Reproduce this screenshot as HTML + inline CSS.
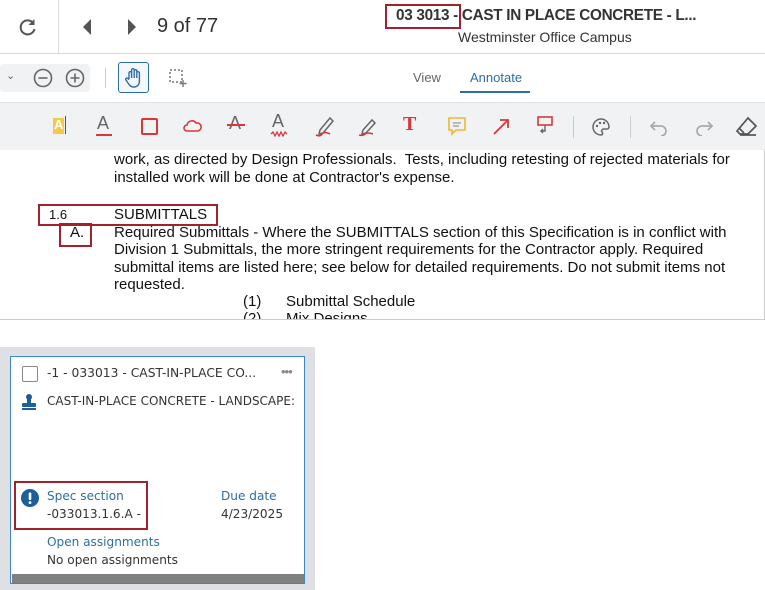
<!DOCTYPE html>
<html><head><meta charset="utf-8"><style>
*{margin:0;padding:0;box-sizing:border-box}
body{width:765px;height:590px;background:#fff;font-family:"Liberation Sans",Arial,sans-serif;position:relative;overflow:hidden;color:#333}
.a{position:absolute}
.doc{font-size:15px;color:#111;line-height:18px;white-space:nowrap}
.red{border:2px solid #a3212b}
.ui{font-family:"DejaVu Sans","Liberation Sans",sans-serif}
</style></head><body>
<div class="a" style="left:0;top:0;width:765px;height:54px;border-bottom:1px solid #d8d9dc;background:#fff"></div>
<div class="a" style="left:58px;top:0;width:1px;height:53px;background:#ddd"></div>
<svg class="a" style="left:18px;top:17px" width="20" height="20" viewBox="0 0 20 20"><path d="M15.5 6.5A7 7 0 1 0 16.5 12" fill="none" stroke="#555" stroke-width="2"/><path d="M16.5 2v6h-6z" fill="#555"/></svg>
<svg class="a" style="left:82px;top:19px" width="10" height="16"><path d="M9 0v16L1 8z" fill="#555"/></svg>
<svg class="a" style="left:127px;top:19px" width="10" height="16"><path d="M1 0v16l8-8z" fill="#555"/></svg>
<div class="a" style="left:157px;top:15px;font-size:20px;color:#333">9 of 77</div>
<div class="a" style="left:396px;top:7px;font-size:15.3px;font-weight:bold;color:#333;letter-spacing:-0.3px">03 3013 - CAST IN PLACE CONCRETE - L...</div>
<div class="a red" style="left:385px;top:4px;width:76px;height:25px"></div>
<div class="a" style="left:458px;top:29px;font-size:14px;color:#333">Westminster Office Campus</div>
<div class="a" style="left:0;top:64px;width:90px;height:28px;background:#f1f2f4;border-radius:4px"></div>
<div class="a" style="left:6px;top:69px;font-size:11px;color:#666">⌄</div>
<svg class="a" style="left:32px;top:67px" width="22" height="22"><circle cx="11" cy="11" r="8.5" fill="none" stroke="#666" stroke-width="1.6"/><path d="M6.5 11h9" stroke="#666" stroke-width="1.6"/></svg>
<svg class="a" style="left:64px;top:67px" width="22" height="22"><circle cx="11" cy="11" r="8.5" fill="none" stroke="#666" stroke-width="1.6"/><path d="M6.5 11h9M11 6.5v9" stroke="#666" stroke-width="1.6"/></svg>
<div class="a" style="left:105px;top:68px;width:1px;height:20px;background:#ccc"></div>
<div class="a" style="left:118px;top:62px;width:31px;height:31px;border:1.5px solid #2e6da4;border-radius:3px;background:#f4f8fc"></div>
<svg class="a" style="left:124px;top:67px" width="20" height="22" viewBox="0 0 20 22"><path d="M5 12V6a1.3 1.3 0 0 1 2.6 0v5V3a1.3 1.3 0 0 1 2.6 0v8V4a1.3 1.3 0 0 1 2.6 0v7V6a1.3 1.3 0 0 1 2.6 0v8c0 4-2.5 6-5.5 6S6 19 4 16l-2-3a1.2 1.2 0 0 1 2-1.5l1 1.2" fill="none" stroke="#2e6da4" stroke-width="1.4"/></svg>
<svg class="a" style="left:168px;top:68px" width="20" height="20"><rect x="2" y="2" width="12" height="12" fill="none" stroke="#777" stroke-width="1.5" stroke-dasharray="2 2"/><path d="M15 12v7M11.5 15.5h7" stroke="#777" stroke-width="1.4"/></svg>
<div class="a" style="left:413px;top:70px;font-size:13px;color:#666">View</div>
<div class="a" style="left:470px;top:70px;font-size:13px;color:#2e6da4">Annotate</div>
<div class="a" style="left:460px;top:91px;width:70px;height:2px;background:#2e6da4"></div>
<div class="a" style="left:0;top:102px;width:765px;height:48px;background:#f1f2f4;border-top:1px solid #e2e3e5"></div>
<div class="a" style="left:53px;top:118px;width:11px;height:16px;background:#f7c948"></div>
<div class="a" style="left:54px;top:117px;font-size:13px;color:#fff;font-weight:bold">A</div>
<div class="a" style="left:65px;top:116px;width:1px;height:18px;background:#555"></div>
<div class="a" style="left:97px;top:113px;font-size:18px;color:#666">A</div><div class="a" style="left:96px;top:134px;width:16px;height:2px;background:#d9383a"></div>
<div class="a" style="left:141px;top:118px;width:17px;height:17px;border:2px solid #d9383a;border-radius:2px"></div>
<svg class="a" style="left:183px;top:119px" width="20" height="14"><path d="M4 12a3 3 0 0 1 0-6 5 5 0 0 1 9-2 4 4 0 0 1 2 8z" fill="none" stroke="#d9383a" stroke-width="1.6"/></svg>
<div class="a" style="left:229px;top:113px;font-size:18px;color:#666">A</div><div class="a" style="left:227px;top:124px;width:18px;height:1.5px;background:#d9383a"></div>
<div class="a" style="left:272px;top:111px;font-size:18px;color:#666">A</div>
<svg class="a" style="left:270px;top:131px" width="18" height="6"><path d="M1 3l2-2 2 4 2-4 2 4 2-4 2 4 2-4 2 2" fill="none" stroke="#d9383a" stroke-width="1.3"/></svg>
<svg class="a" style="left:314px;top:114px" width="22" height="24"><path d="M6 16L16 4l3 3-10 12-4 1z" fill="none" stroke="#666" stroke-width="1.5"/><path d="M2 21q4 2 6-1t8 0" fill="none" stroke="#d9383a" stroke-width="1.6"/></svg>
<svg class="a" style="left:357px;top:114px" width="22" height="24"><path d="M6 16L15 6l3 3-9 10-4 1z" fill="none" stroke="#666" stroke-width="1.5"/><path d="M2 21q4 1 6-1t8 0" fill="none" stroke="#d9383a" stroke-width="1.6"/></svg>
<div class="a" style="left:403px;top:113px;font-size:20px;color:#d9383a;font-family:'Liberation Serif',serif;font-weight:bold">T</div>
<svg class="a" style="left:447px;top:116px" width="20" height="22"><path d="M2 2h16v12H9l-4 4v-4H2z" fill="none" stroke="#f2b632" stroke-width="1.6"/><path d="M6 7h8M6 10h6" stroke="#999" stroke-width="1.3"/></svg>
<svg class="a" style="left:491px;top:117px" width="20" height="20"><path d="M3 17L16 4M9 3h8v8" fill="none" stroke="#d9383a" stroke-width="1.8"/></svg>
<svg class="a" style="left:535px;top:115px" width="20" height="22"><rect x="3" y="2" width="14" height="8" fill="none" stroke="#d9383a" stroke-width="1.6"/><path d="M10 10v6H6m2-2l-2 2 2 2" fill="none" stroke="#666" stroke-width="1.4"/></svg>
<div class="a" style="left:573px;top:116px;width:1px;height:22px;background:#ccc"></div>
<svg class="a" style="left:591px;top:117px" width="20" height="20"><path d="M10 2a8 8 0 0 0 0 16c2 0 2-2 1-3s0-3 2-3h3a2 2 0 0 0 2-2A8 8 0 0 0 10 2z" fill="none" stroke="#666" stroke-width="1.5"/><circle cx="6" cy="9" r="1.2" fill="#666"/><circle cx="9" cy="6" r="1.2" fill="#666"/><circle cx="13" cy="6" r="1.2" fill="#666"/></svg>
<div class="a" style="left:630px;top:116px;width:1px;height:22px;background:#ccc"></div>
<svg class="a" style="left:650px;top:118px" width="20" height="18"><path d="M5 4L1 8l4 4M1 8h10a5 5 0 0 1 0 10" fill="none" stroke="#aaa" stroke-width="1.7"/></svg>
<svg class="a" style="left:693px;top:118px" width="20" height="18"><path d="M15 4l4 4-4 4M19 8H9a5 5 0 0 0 0 10" fill="none" stroke="#aaa" stroke-width="1.7"/></svg>
<svg class="a" style="left:736px;top:116px" width="22" height="20"><path d="M12 2l8 8-8 8H4l-3-3z" fill="none" stroke="#555" stroke-width="1.7"/><path d="M3 12l5 5" stroke="#555" stroke-width="1.7"/><path d="M4 19h16" stroke="#555" stroke-width="1.7"/></svg>
<div class="a" style="left:0;top:150px;width:765px;height:170px;border-right:1px solid #ccc;border-bottom:1px solid #ccc;background:#fff;overflow:hidden">
<div class="a doc" style="left:114px;top:1px">work, as directed by Design Professionals.&nbsp; Tests, including retesting of rejected materials for</div>
<div class="a doc" style="left:114px;top:19px">installed work will be done at Contractor's expense.</div>
<div class="a doc" style="left:49px;top:56px;font-size:13px">1.6</div>
<div class="a doc" style="left:114px;top:56px">SUBMITTALS</div>
<div class="a doc" style="left:70px;top:74px">A.</div>
<div class="a doc" style="left:114px;top:74px">Required Submittals - Where the SUBMITTALS section of this Specification is in conflict with</div>
<div class="a doc" style="left:114px;top:91px">Division 1 Submittals, the more stringent requirements for the Contractor apply. Required</div>
<div class="a doc" style="left:114px;top:109px">submittal items are listed here; see below for detailed requirements. Do not submit items not</div>
<div class="a doc" style="left:114px;top:126px">requested.</div>
<div class="a doc" style="left:243px;top:143px">(1)</div><div class="a doc" style="left:286px;top:143px">Submittal Schedule</div>
<div class="a doc" style="left:243px;top:160px">(2)</div><div class="a doc" style="left:286px;top:160px">Mix Designs</div>
</div>
<div class="a red" style="left:38px;top:204px;width:180px;height:22px"></div>
<div class="a red" style="left:59px;top:223px;width:33px;height:24px"></div>
<div class="a" style="left:0;top:347px;width:315px;height:243px;background:#dfe0e3"></div>
<div class="a" style="left:10px;top:356px;width:295px;height:228px;background:#fff;border:1.5px solid #3a86c8"></div>
<div class="a" style="left:12px;top:574px;width:292px;height:9px;background:#808080"></div>
<div class="a" style="left:22px;top:366px;width:16px;height:16px;border:1.5px solid #888;border-radius:2px"></div>
<div class="a ui" style="left:47px;top:366px;font-size:12.3px;color:#333">-1 - 033013 - CAST-IN-PLACE CO...</div>
<div class="a" style="left:281px;top:364px;font-size:13px;color:#888;letter-spacing:-1px">•••</div>
<svg class="a" style="left:20px;top:393px" width="18" height="18"><circle cx="9" cy="4" r="3" fill="#1d5e9c"/><rect x="7" y="5" width="4" height="6" fill="#1d5e9c"/><rect x="2" y="10" width="14" height="4" rx="1" fill="#1d5e9c"/><rect x="2" y="15" width="14" height="2" fill="#1d5e9c"/></svg>
<div class="a ui" style="left:47px;top:394px;font-size:12px;color:#333">CAST-IN-PLACE CONCRETE - LANDSCAPE:</div>
<svg class="a" style="left:21px;top:489px" width="18" height="18"><circle cx="9" cy="9" r="9" fill="#1d5e9c"/><rect x="7.7" y="3.5" width="2.6" height="7.5" rx="1" fill="#fff"/><circle cx="9" cy="13.6" r="1.4" fill="#fff"/></svg>
<div class="a ui" style="left:47px;top:489px;font-size:12.1px;color:#2e6da4">Spec section</div>
<div class="a ui" style="left:47px;top:507px;font-size:12.1px;color:#333">-033013.1.6.A -</div>
<div class="a red" style="left:14px;top:481px;width:134px;height:49px"></div>
<div class="a ui" style="left:221px;top:489px;font-size:12.1px;color:#2e6da4">Due date</div>
<div class="a ui" style="left:221px;top:507px;font-size:12.1px;color:#333">4/23/2025</div>
<div class="a ui" style="left:47px;top:535px;font-size:12.1px;color:#2e6da4">Open assignments</div>
<div class="a ui" style="left:47px;top:553px;font-size:12.1px;color:#333">No open assignments</div>
</body></html>
